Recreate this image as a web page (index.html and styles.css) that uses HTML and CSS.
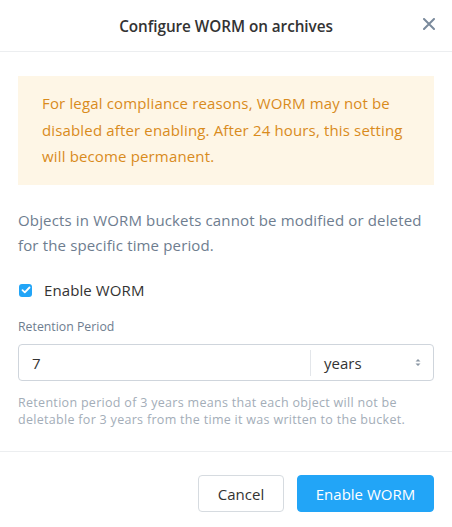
FILE: index.html
```html
<!DOCTYPE html>
<html>
<head>
<meta charset="utf-8">
<link rel="stylesheet" href="styles.css">
</head>
<body>
<div class="modal">
  <header class="header">
    <h1 class="title">Configure WORM on archives</h1>
    <button class="close" aria-label="Close">
      <svg width="12" height="12" viewBox="0 0 12 12"><path d="M1 1L11 11M11 1L1 11" stroke="#7a8a9c" stroke-width="2" stroke-linecap="round"/></svg>
    </button>
  </header>
  <div class="body">
    <div class="alert">For legal compliance reasons, WORM may not be disabled after enabling. After 24 hours, this setting will become permanent.</div>
    <p class="desc">Objects in WORM buckets cannot be modified or deleted for the specific time period.</p>
    <label class="check">
      <span class="box"><svg width="10" height="8" viewBox="0 0 10 8"><path d="M1.5 4.2L3.8 6.3L8.5 1.5" fill="none" stroke="#fff" stroke-width="1.8" stroke-linecap="round" stroke-linejoin="round"/></svg></span>
      <span>Enable WORM</span>
    </label>
    <div class="field-label">Retention Period</div>
    <div class="input">
      <span class="value">7</span>
      <span class="unit">years
        <svg width="6" height="9" viewBox="0 0 6 9"><path d="M0.5 3.5L3 1L5.5 3.5Z M0.5 5.5L3 8L5.5 5.5Z" fill="#8a96a3"/></svg>
      </span>
    </div>
    <p class="help">Retention period of 3 years means that each object will not be deletable for 3 years from the time it was written to the bucket.</p>
  </div>
  <footer class="footer">
    <button class="btn cancel">Cancel</button>
    <button class="btn primary">Enable WORM</button>
  </footer>
</div>
</body>
</html>
```
FILE: styles.css
```css
* { box-sizing: border-box; }
html, body { margin: 0; padding: 0; background: #fff; }
body { font-family: "Open Sans", "Lato", sans-serif; color: #333; }
.modal { width: 452px; height: 527px; display: flex; flex-direction: column; }
.header { height: 52px; flex: none; border-bottom: 1px solid #eceef0; display: flex; align-items: center; justify-content: center; position: relative; }
.title { margin: 0; font-size: 15.3px; font-weight: 600; color: #333; letter-spacing: -0.05px; }
.close { position: absolute; right: 16px; top: 17px; border: 0; background: none; padding: 0; width: 14px; height: 14px; display: flex; align-items: center; justify-content: center; }
.body { padding: 24px 18px 0 18px; flex: 1; }
.alert { background: #fef6e6; color: #d98b1c; font-size: 15px; letter-spacing: 0.15px; line-height: 26.5px; padding: 14px 24px 14px 24px; height: 109px; }
.desc { margin: 23px 0 0 0; color: #6e7d8f; font-size: 15px; letter-spacing: 0.15px; line-height: 25px; }
.check { display: flex; align-items: center; margin-top: 22px; font-size: 15px; letter-spacing: 0.1px; color: #333; height: 20px; }
.box { width: 13px; height: 13px; background: #22a5f7; border-radius: 3px; display: flex; align-items: center; justify-content: center; margin: 0 12px 0 1px; }
.field-label { margin-top: 19px; font-size: 12.3px; color: #6e7d8f; line-height: 16px; }
.input { margin-top: 9px; height: 37px; border: 1px solid #cfd5dc; border-radius: 4px; display: flex; align-items: center; font-size: 15px; }
.value { flex: 1; padding-left: 13px; color: #333; }
.unit { width: 123px; height: 26px; border-left: 1px solid #e3e6ea; display: flex; align-items: center; justify-content: space-between; padding: 0 12px 0 13px; color: #333; }
.help { margin: 13px 0 0 0; font-size: 12.5px; letter-spacing: 0.3px; line-height: 17px; color: #a3adb8; }
.footer { height: 76px; flex: none; border-top: 1px solid #eceef0; display: flex; align-items: flex-start; justify-content: flex-end; padding: 23px 18px 0; gap: 13px; }
.btn { height: 37px; border-radius: 4px; font-family: inherit; font-size: 15px; padding: 0 14px; }
.cancel { background: #fff; border: 1px solid #d6dbe0; color: #333; width: 86px; }
.primary { background: #22a5f7; border: 1px solid #22a5f7; color: #fff; width: 137px; }
```
